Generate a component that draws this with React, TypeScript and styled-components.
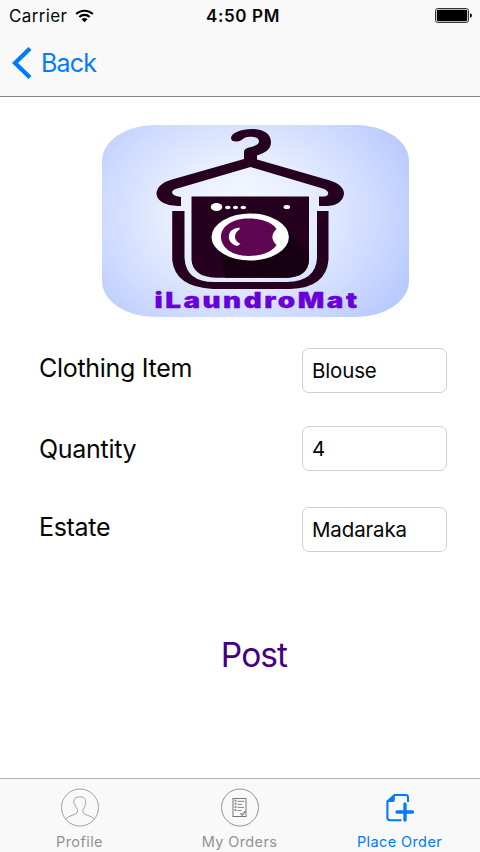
import React from "react";
import styled, { createGlobalStyle } from "styled-components";

const GlobalStyle = createGlobalStyle`
  *, *::before, *::after { box-sizing: border-box; }
  body { margin: 0; background: #fff; }
  svg { display: block; flex: none; }
`;

const Screen = styled.div`
  width: 480px;
  height: 852px;
  display: flex;
  flex-direction: column;
  overflow: hidden;
  background: #fff;
  color: #060606;
  font-family: Inter, "Liberation Sans", sans-serif;
`;

const Header = styled.header`
  height: 97px;
  flex: none;
  background: #f9f9f9;
  border-bottom: 1px solid #858585;
`;

const StatusBar = styled.div`
  height: 31px;
  display: grid;
  grid-template-columns: 1fr auto 1fr;
  align-items: center;
  padding: 0 8px 0 9px;
`;

const Carrier = styled.div`
  display: flex;
  align-items: center;
  gap: 8px;
  font-size: 17px;
  letter-spacing: 0.35px;
`;

const Clock = styled.div`
  font-size: 17px;
  font-weight: 600;
  letter-spacing: 0.65px;
  padding-left: 5px;
`;

const BatterySlot = styled.div`
  justify-self: end;
`;

const BackButton = styled.button`
  display: flex;
  align-items: center;
  gap: 9px;
  height: 64px;
  padding: 0 0 0 12px;
  border: 0;
  background: none;
  color: #007aff;
  font: 400 25px/1 Inter, "Liberation Sans", sans-serif;
  letter-spacing: -0.8px;
`;

const Content = styled.main`
  flex: 1;
  display: flex;
  flex-direction: column;
  padding: 28px 33px 0 39px;
`;

const LogoFrame = styled.div`
  width: 307px;
  height: 192px;
  margin-left: 63px;
  border-radius: 53px / 36px;
  overflow: hidden;
`;

const Form = styled.form`
  display: flex;
  flex-direction: column;
  margin-top: 31px;
`;

const Row = styled.label<{ $gap?: number }>`
  display: flex;
  align-items: center;
  justify-content: space-between;
  height: 45px;
  margin-top: ${(p) => p.$gap ?? 0}px;
`;

const RowLabel = styled.span<{ $lift: number }>`
  font-size: 25px;
  line-height: 30px;
  letter-spacing: -0.3px;
  padding-bottom: ${(p) => p.$lift}px;
`;

const Field = styled.input`
  width: 145px;
  height: 45px;
  padding: 0 9px 1px 9px;
  border: 1px solid #cfcfcf;
  border-radius: 7px;
  background: #fff;
  color: #060606;
  font: 400 20.5px/24px Inter, "Liberation Sans", sans-serif;
  letter-spacing: -0.15px;
  outline: 0;
`;

const PostButton = styled.button`
  align-self: center;
  margin: 82px 0 0 22px;
  padding: 0;
  border: 0;
  background: none;
  color: #420082;
  font: 400 33.5px/42px Inter, "Liberation Sans", sans-serif;
  letter-spacing: -0.9px;
`;

const TabBar = styled.nav`
  height: 74px;
  flex: none;
  display: grid;
  grid-template-columns: repeat(3, 1fr);
  background: #f9f9f9;
  border-top: 1px solid #b0b0b0;
`;

const Tab = styled.div<{ $active?: boolean }>`
  display: flex;
  flex-direction: column;
  align-items: center;
  padding: 9px 1px 0 0;
  color: ${(p) => (p.$active ? "#007aff" : "#929292")};
`;

const TabLabel = styled.span`
  margin-top: 5px;
  font-size: 14.5px;
  line-height: 20px;
  letter-spacing: 0.4px;
`;

function Wifi() {
  return (
    <svg width="19" height="14" viewBox="0 0 19 14" fill="none" stroke="#000" strokeWidth="2.1">
      <path d="M1.2 5.1A11.8 11.8 0 0 1 17.8 5.1" />
      <path d="M4.3 8A7.5 7.5 0 0 1 14.7 8" />
      <path d="M6.5 10.3Q9.5 7.7 12.5 10.3L9.5 13.3Z" fill="#000" stroke="none" />
    </svg>
  );
}

function Battery() {
  return (
    <svg width="37" height="15" viewBox="0 0 37 15">
      <rect x="0.5" y="0.5" width="33" height="14" rx="2.2" fill="none" stroke="#333" />
      <rect x="1.8" y="1.8" width="30.4" height="11.4" rx="1" fill="#000" />
      <path d="M35 5.2Q37 5.8 37 7.5T35 9.8Z" fill="#000" />
    </svg>
  );
}

function Logo() {
  const dark = "#26001f";
  return (
    <svg width="307" height="192" viewBox="102 125 307 192">
      <defs>
        <radialGradient id="glow" gradientUnits="userSpaceOnUse" cx="0" cy="0" r="1" gradientTransform="translate(240 215) scale(190 150)">
          <stop offset="0" stopColor="#f8faff" />
          <stop offset="0.35" stopColor="#e9effe" />
          <stop offset="0.7" stopColor="#d0dcff" />
          <stop offset="1" stopColor="#b8c9fe" />
        </radialGradient>
      </defs>
      <rect x="102" y="125" width="307" height="192" fill="url(#glow)" />
      <path d="M231 138C231 133 241 129 252 129C264 129 271 134 271 142.500C271 150 264 153 257 155.500V163H244V152Q244 148.500 249 147.500C256 146 259 144 259 141.500C259 138 255 136.700 250 136.700C242 136.700 243 141.500 236.500 141.500Q231 141.500 231 138Z" fill={dark} />
      <path d="M244 159L250 157L257 159.500L330 180.500Q344 185 344 194Q342 205 328 206H319V196.500H324Q329 196 328 192Q326 189 321 188L250.500 167L179 188Q173 189 172 192Q172 196 181 197V206H178Q158 205 156.500 194Q156.500 184 172 179.500Z" fill={dark} />
      <path d="M172.200 211H184.500V258Q186 282 214 282H287Q316 281 317 258V211H328.500V260Q326 288 290 289H213Q175 287 172.200 260Z" fill={dark} />
      <path d="M191.500 196.500H309V260Q308 277.700 286 277.700H216Q193 277 191.500 260Z" fill={dark} />
      <path d="M220 251L225 277.700H286Q308 277 309 260V254L287 230Z" fill="#170011" />
      <ellipse cx="250.200" cy="237" rx="38.700" ry="23.500" fill="#fff" />
      <path d="M221 237C221 226 233 218.500 248.500 218.500C262 218.500 273 223 276.500 229C271 234 271 240 276.500 245C272 252 262 256 248.500 256C233 256 221 248 221 237Z" fill="#5e0651" />
      <path d="M239 227.500Q228 229 228.800 238Q230 244 237 246L240.500 244Q235 241 235 237Q235 232 240 229Z" fill="#fff" />
      <g fill="#fff">
        <ellipse cx="216.500" cy="207" rx="5.800" ry="4" />
        <ellipse cx="227.800" cy="207.500" rx="2.800" ry="1.700" />
        <ellipse cx="235.500" cy="207.500" rx="2.600" ry="1.700" />
        <ellipse cx="243.300" cy="207.500" rx="2.800" ry="1.700" />
        <ellipse cx="286.800" cy="207" rx="3.300" ry="2.100" />
      </g>
      <text x="154.500" y="307.700" textLength="205" lengthAdjust="spacingAndGlyphs" letterSpacing="1.9" fill="#6900d8" stroke="#6900d8" strokeWidth="0.3" fontFamily="Inter, 'Liberation Sans', sans-serif" fontWeight="900" fontSize="21">iLaundroMat</text>
    </svg>
  );
}

function ProfileIcon() {
  return (
    <svg width="40" height="39" viewBox="0 0 40 39" fill="none" stroke="#a2a2a2" strokeWidth="1">
      <circle cx="20" cy="19.500" r="18.500" />
      <path d="M5.500 31Q8 28.500 13 27Q17.500 25.500 17.500 23.500V21.500Q15.300 19 15 16.500Q13.200 15.500 13.800 13L14.100 12C14.500 9.500 17 9.300 19.500 8.800C23 9 26 10 25.500 14Q26.800 15.500 25 17.500Q24.500 20 23 21.500V24.500Q24 26.500 27.500 27.300Q32 28.500 34.500 31" />
    </svg>
  );
}

function OrdersIcon() {
  return (
    <svg width="40" height="39" viewBox="0 0 40 39" fill="none" stroke="#858585" strokeWidth="1">
      <circle cx="20" cy="19.500" r="18.500" stroke="#929292" />
      <rect x="13" y="10.500" width="13" height="18" stroke="#777" />
      <path d="M17.500 13.300H24M17.500 16.400H22M17.500 19.400H24M17.500 22.500H21.500" />
      <path d="M15.500 11.800V24" strokeWidth="1.700" strokeDasharray="2 1.050" />
      <path d="M20.500 25.300L22.200 27.200L25.500 23" strokeWidth="1.300" />
    </svg>
  );
}

function PlaceIcon() {
  return (
    <svg width="40" height="39" viewBox="0 0 40 39" fill="none" stroke="#007aff">
      <path d="M21.500 32.200H10Q7.400 32.200 7.400 29.800V13.500L14.500 7H25.500Q28 7 28 9.400V14" strokeWidth="2.100" />
      <path d="M6.500 14L14.800 6.200V12Q14.800 14 13 14Z" fill="#007aff" stroke="none" />
      <path d="M25 16V32M17 24H32.500" strokeWidth="3.300" strokeLinecap="round" />
    </svg>
  );
}

export default function App() {
  return (
    <Screen>
      <GlobalStyle />
      <Header>
        <StatusBar>
          <Carrier>Carrier <Wifi /></Carrier>
          <Clock>4:50 PM</Clock>
          <BatterySlot><Battery /></BatterySlot>
        </StatusBar>
        <BackButton type="button">
          <svg width="20" height="32" viewBox="0 0 20 32" fill="none" stroke="#007aff" strokeWidth="4.300">
            <path d="M18 1.500L3 16L18 30.500" />
          </svg>
          Back
        </BackButton>
      </Header>
      <Content>
        <LogoFrame><Logo /></LogoFrame>
        <Form>
          <Row>
            <RowLabel $lift={5}>Clothing Item</RowLabel>
            <Field defaultValue="Blouse" />
          </Row>
          <Row $gap={33}>
            <RowLabel $lift={0}>Quantity</RowLabel>
            <Field defaultValue="4" />
          </Row>
          <Row $gap={36}>
            <RowLabel $lift={5}>Estate</RowLabel>
            <Field defaultValue="Madaraka" />
          </Row>
          <PostButton type="button">Post</PostButton>
        </Form>
      </Content>
      <TabBar>
        <Tab><ProfileIcon /><TabLabel>Profile</TabLabel></Tab>
        <Tab><OrdersIcon /><TabLabel>My Orders</TabLabel></Tab>
        <Tab $active><PlaceIcon /><TabLabel>Place Order</TabLabel></Tab>
      </TabBar>
    </Screen>
  );
}
